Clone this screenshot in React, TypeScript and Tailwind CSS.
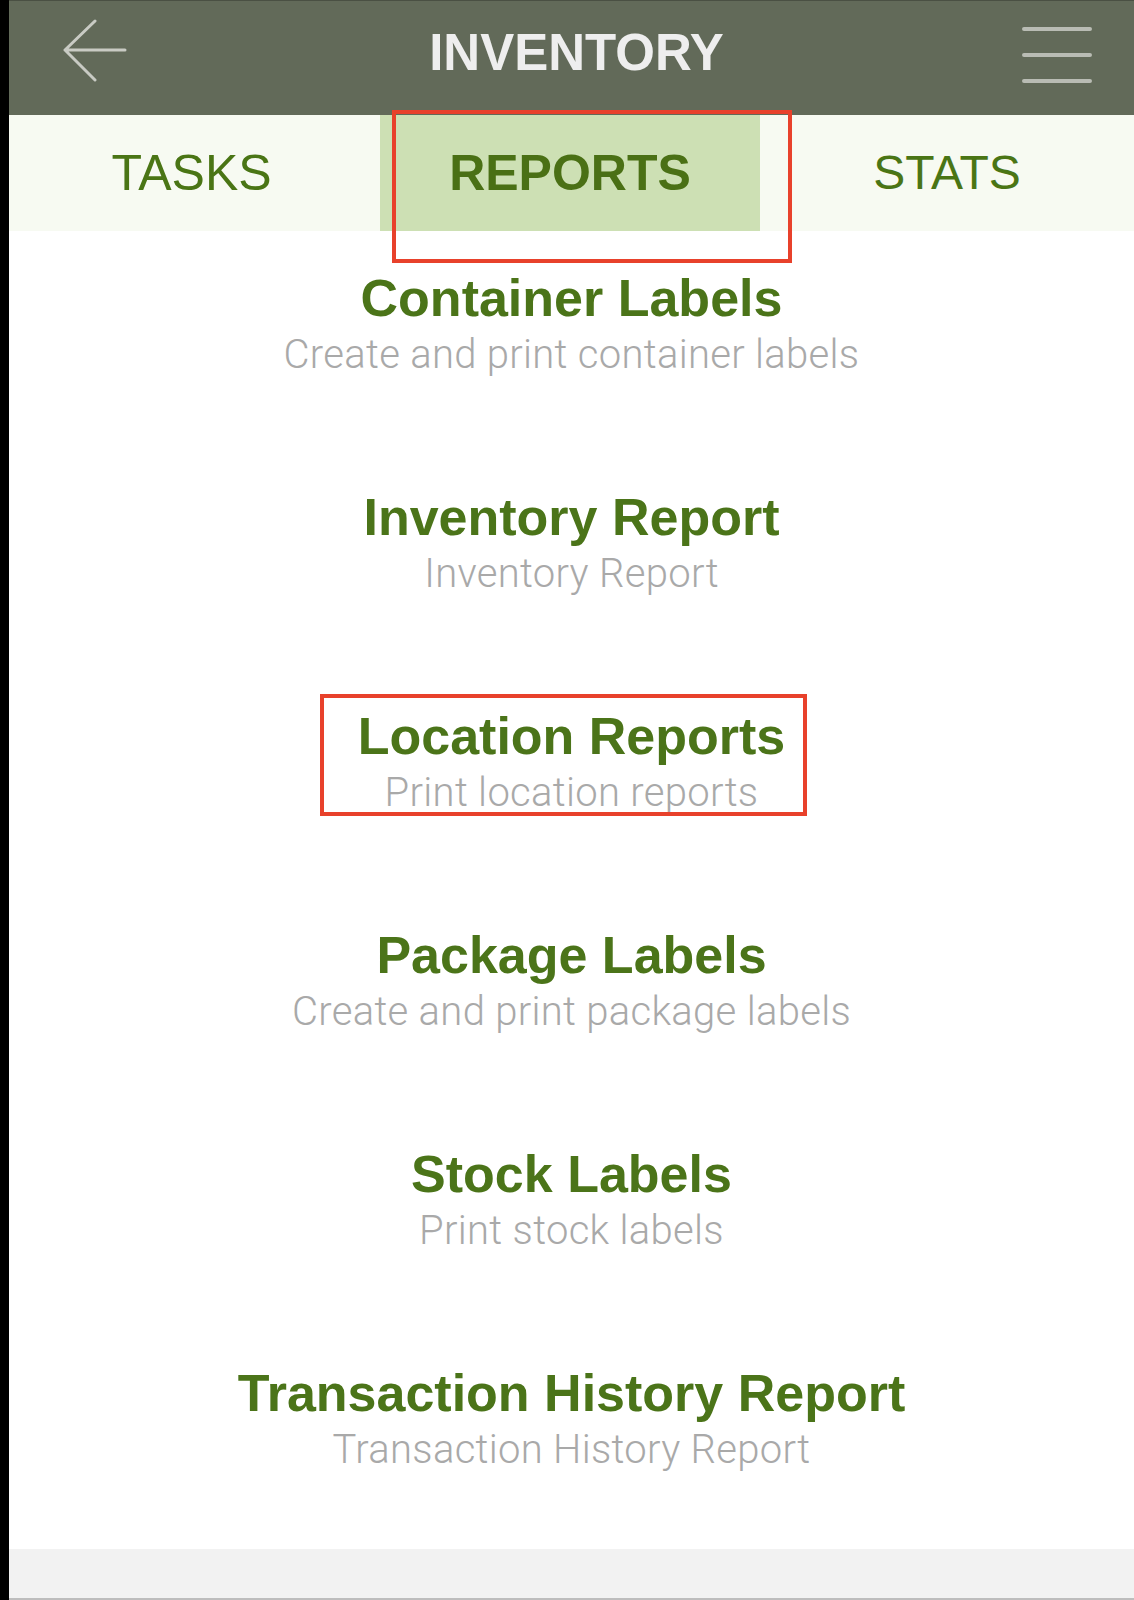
import React from "react";

const items = [
  { title: "Container Labels", sub: "Create and print container labels" },
  { title: "Inventory Report", sub: "Inventory Report" },
  { title: "Location Reports", sub: "Print location reports" },
  { title: "Package Labels", sub: "Create and print package labels" },
  { title: "Stock Labels", sub: "Print stock labels" },
  { title: "Transaction History Report", sub: "Transaction History Report" },
];

export default function App() {
  return (
    <div className="relative flex h-[1600px] w-[1134px] overflow-hidden bg-black">
      <div className="w-[9px] shrink-0 bg-black" />
      <div className="flex flex-1 flex-col bg-white">
        {/* Header */}
        <div className="flex h-[115px] items-center justify-between border-t border-[#4a5043] bg-[#626a59] px-[50px]">
          <svg width="70" height="70" viewBox="0 0 70 70" className="ml-[2px] mb-[8px]">
            <path d="M4 31 L64 31 M4 31 L34 2 M4 31 L34 61" stroke="#c9cbc4" strokeWidth="3" fill="none" strokeLinecap="round" />
          </svg>
          <div
            className="pb-[10px] text-[51px] font-bold text-[#eeeeee]"
            style={{ fontFamily: '"Liberation Sans", Arial, sans-serif' }}
          >
            INVENTORY
          </div>
          <svg width="70" height="60" viewBox="0 0 70 60" className="mr-[-8px] mb-[8px]">
            <path d="M2 5 H68 M2 31 H68 M2 57 H68" stroke="#b9bcb4" strokeWidth="4" fill="none" strokeLinecap="round" />
          </svg>
        </div>
        {/* Tabs */}
        <div
          className="grid h-[116px] grid-cols-[371px_380px_1fr] bg-[#f7faf2]"
          style={{ fontFamily: '"Liberation Sans", Arial, sans-serif' }}
        >
          <div className="flex items-center justify-center pr-[6px] text-[50px] text-[#4a7515]">TASKS</div>
          <div className="flex items-center justify-center bg-[#cde0b4] text-[50px] font-bold text-[#4a7015]">REPORTS</div>
          <div className="flex items-center justify-center text-[48px] text-[#4a7515]">STATS</div>
        </div>
        {/* List */}
        <div className="flex flex-1 flex-col items-center gap-[105px] pt-[37px]">
          {items.map((it) => (
            <div key={it.title} className="flex flex-col items-center">
              <div
                className="h-[60px] text-[52px] leading-[60px] font-bold text-[#4b7419]"
                style={{ fontFamily: '"Liberation Sans", Arial, sans-serif' }}
              >
                {it.title}
              </div>
              <div
                className="h-[54px] text-[40px] leading-[54px] font-light tracking-[0.3px] text-[#a9a9a9]"
                style={{ fontFamily: 'Roboto, "Liberation Sans", sans-serif' }}
              >
                {it.sub}
              </div>
            </div>
          ))}
        </div>
        {/* Footer */}
        <div className="h-[51px] border-b-2 border-[#bdbdbd] bg-[#f2f2f2]" />
      </div>
      {/* Annotation boxes */}
      <div className="pointer-events-none absolute left-[392px] top-[110px] h-[153px] w-[400px] border-[4px] border-[#e8412b]" />
      <div className="pointer-events-none absolute left-[320px] top-[694px] h-[122px] w-[487px] border-[4px] border-[#e8412b]" />
    </div>
  );
}
